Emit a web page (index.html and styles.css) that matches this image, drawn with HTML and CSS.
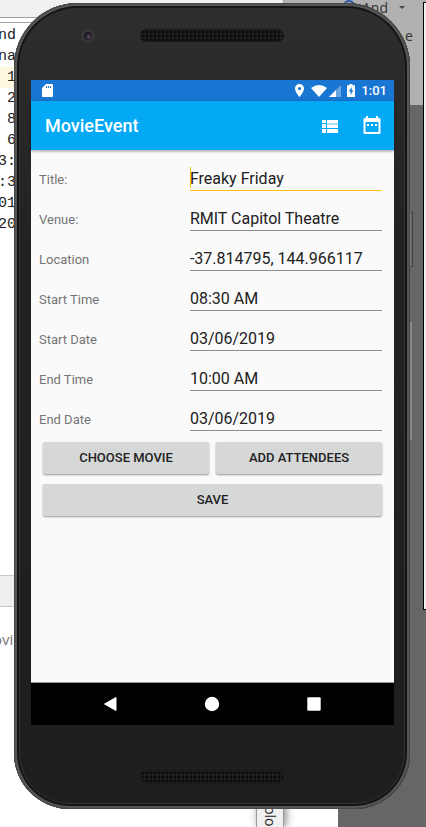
FILE: index.html
```html
<!DOCTYPE html>
<html lang="en">
<head>
<meta charset="utf-8">
<meta name="viewport" content="width=device-width, initial-scale=1">
<title>MovieEvent</title>
<link rel="stylesheet" href="styles.css">
</head>
<body>
<div class="desktop">
  <div class="win toolbar-win"></div>
  <div class="win editor">
    <div class="code">
      <span>nd</span>
      <span>na</span>
      <mark>1</mark>
      <span>2</span>
      <span>8</span>
      <span>6</span>
      <span>3:</span>
      <span>:3</span>
      <span>01</span>
      <span>20</span>
    </div>
  </div>
  <div class="win split"></div>
  <div class="win log">ovie</div>
  <div class="win dimmed"></div>
  <div class="win ide">
    <svg class="ide-icon" viewBox="0 0 14 14"><circle cx="7" cy="7" r="5" fill="none" stroke="#2458a0" stroke-width="2"/></svg>
    <span class="ide-name">And</span>
    <span class="ide-arrow"></span>
    <span class="ide-sub">e</span>
  </div>
  <div class="win tab">plo</div>
  <div class="win outlined"></div>
</div>
<div class="phone">
  <div class="key power"></div>
  <div class="key volume"></div>
  <div class="bezel top">
    <span class="camera"></span>
    <span class="speaker"></span>
  </div>
  <main class="screen">
    <div class="status">
      <svg class="sd" viewBox="0 0 11 13"><path d="M4 0h6q1 0 1 1v11q0 1-1 1H1q-1 0-1-1V4z" fill="#fff"/><path d="M4 2h1v2H4zM6 2h1v2H6zM8 2h1v2H8z" fill="#1976d2"/></svg>
      <svg class="pin" viewBox="0 0 9 13"><path fill="#fff" fill-rule="evenodd" d="M4.500 0A4.500 4.500 0 0 0 0 4.500C0 8 4.500 13 4.500 13S9 8 9 4.500A4.500 4.500 0 0 0 4.500 0zm0 3a1.600 1.600 0 1 1 0 3.200 1.600 1.600 0 0 1 0-3.200z"/></svg>
      <svg class="wifi" viewBox="0 0 16 12"><path fill="#fff" d="M0 3Q8-3 16 3L8 12z"/></svg>
      <svg class="cell" viewBox="0 0 12 12"><path fill="#fff" opacity=".35" d="M12 0v12H0z"/><path fill="#fff" d="M7 5v7H0z"/></svg>
      <svg class="battery" viewBox="0 0 8 13"><path fill="#fff" d="M2.500 0h3v1.200H8V13H0V1.200h2.500z"/><path fill="#1976d2" d="M4.800 3L1.800 7.500h1.800V11l2.800-4.700H4.700z"/></svg>
      <time>1:01</time>
    </div>
    <header class="appbar">
      <h1>MovieEvent</h1>
      <button type="button" aria-label="List"><svg viewBox="0 0 22 22"><path fill="#fff" d="M3 5h4v3H3zM3 9h4v4H3zM3 14h4v4H3zM8 5h11v3H8zM8 10h11v3H8zM8 14h11v4H8z"/><path fill="#fff" opacity=".65" d="M8 8h11v1H8zM8 9h11v1H8z"/></svg></button>
      <button type="button" aria-label="Calendar"><svg viewBox="0 0 22 22"><path fill="#fff" fill-rule="evenodd" d="M5 1h2v2h8V1h2v2h1q1.500 0 1.500 1.500v13Q19.500 19 18 19H4q-1.500 0-1.500-1.500v-13Q2.500 3 4 3h1zM4.500 7v10h13V7zM6 9h2v2H6zM10 9h2v2h-2zM14 9h2v2h-2z"/></svg></button>
    </header>
    <form class="content">
      <div class="field"><label for="t">Title:</label><span class="box focused"><input id="t" type="text" value="Freaky Friday"></span></div>
      <div class="field"><label for="v">Venue:</label><span class="box"><input id="v" type="text" value="RMIT Capitol Theatre"></span></div>
      <div class="field"><label for="l">Location</label><span class="box"><input id="l" type="text" value="-37.814795, 144.966117"></span></div>
      <div class="field"><label for="st">Start Time</label><span class="box"><input id="st" type="text" value="08:30 AM"></span></div>
      <div class="field"><label for="sd">Start Date</label><span class="box"><input id="sd" type="text" value="03/06/2019"></span></div>
      <div class="field"><label for="et">End Time</label><span class="box"><input id="et" type="text" value="10:00 AM"></span></div>
      <div class="field"><label for="ed">End Date</label><span class="box"><input id="ed" type="text" value="03/06/2019"></span></div>
      <div class="actions">
        <button type="button">CHOOSE MOVIE</button>
        <button type="button">ADD ATTENDEES</button>
        <button type="button" class="wide">SAVE</button>
      </div>
    </form>
    <nav class="navbar">
      <button type="button" aria-label="Back"><svg viewBox="0 0 16 16"><path fill="#fff" stroke="#fff" stroke-linejoin="round" d="M2.500 8L14 1.500v13z"/></svg></button>
      <button type="button" aria-label="Home"><svg viewBox="0 0 16 16"><circle cx="8" cy="8" r="7.200" fill="#fff"/></svg></button>
      <button type="button" aria-label="Recent apps"><svg viewBox="0 0 16 16"><rect x="1.300" y="1.300" width="13.400" height="13.400" rx="1" fill="#fff"/></svg></button>
    </nav>
  </main>
  <div class="bezel bottom"><span class="speaker"></span></div>
</div>
</body>
</html>
```
FILE: styles.css
```css
* { box-sizing: border-box; }

body {
  margin: 0;
  position: relative;
  min-height: 100vh;
  display: flex;
  padding: 3px 16px 18px 14px;
  overflow: hidden;
  background: #fff;
  font-family: Roboto, "Liberation Sans", sans-serif;
}

svg { display: block; }
button { padding: 0; border: 0; background: none; font-family: inherit; }

/* Desktop windows behind the device */
.desktop { position: absolute; inset: 0; overflow: hidden; }
.win { position: absolute; }
.toolbar-win { left: 0; top: 0; width: 284px; height: 18px; background: #f0f0f0; border-bottom: 1px solid #a0a0a0; border-right: 1px solid #a0a0a0; }
.editor { left: 0; top: 22px; width: 40px; height: 554px; border-top: 1px solid #a0a0a0; }
.code {
  width: 16px;
  padding-top: 2px;
  display: flex;
  flex-direction: column;
  align-items: flex-end;
  font: 15px/21px "Liberation Mono", monospace;
  color: #222;
}
.code mark { width: 100%; background: #fff8e1; color: inherit; text-align: right; }
.split { left: 0; top: 575px; width: 40px; height: 32px; background: #eee; border: 1px solid #c8c8c8; border-width: 1px 0; }
.log { left: -7px; top: 629px; font: 15px/20px "Open Sans", sans-serif; color: #777; }
.dimmed { left: 338px; right: 0; top: 105px; bottom: 0; background: #666; }
.ide { left: 284px; right: 0; top: 0; height: 105px; background: #b1b1b1; color: #333; font: 14px/18px "Open Sans", sans-serif; }
.ide span, .ide svg { position: absolute; }
.ide-icon { left: 58px; top: -1px; width: 14px; height: 14px; }
.ide-name { left: 78px; top: -1px; }
.ide-sub { left: 121px; top: 27px; }
.ide-arrow { left: 115px; top: 6px; border: 3px solid transparent; border-top-color: #444; }
.tab {
  left: 256px;
  bottom: 0;
  width: 28px;
  height: 52px;
  border: 1px solid #999;
  border-width: 0 1px;
  background: #f0f0f0;
  box-shadow: 2px 0 8px #888;
  writing-mode: vertical-rl;
  text-align: right;
  font: 14px/26px "Open Sans", sans-serif;
  color: #222;
}
.outlined { left: 423px; right: -2px; top: 2px; height: 608px; background: #f2f2f2; border: 1px solid #000; }

/* Device */
.phone {
  position: relative;
  flex: 1;
  display: flex;
  flex-direction: column;
  padding: 0 16px 0 17px;
  border-radius: 64px 64px 56px 56px;
  background: linear-gradient(#2e2e2e, #222 30%, #1e1e1e);
  box-shadow: inset 0 0 0 1px #484848, inset 0 0 0 3px #555, inset 0 0 0 5px #151515, inset 0 0 0 6px #303030;
}
.key { position: absolute; left: 100%; width: 3px; border: 1px solid #444; border-left-color: #777; }
.power { top: 209px; height: 55px; }
.volume { top: 319px; height: 118px; width: 2px; border-color: #888; }
.bezel { display: grid; justify-items: center; align-content: start; position: relative; padding-right: 2px; }
.top { height: 77px; padding-top: 26px; }
.bottom { height: 84px; padding-top: 45px; }
.camera {
  position: absolute;
  left: 50px;
  top: 26px;
  width: 14px;
  height: 14px;
  border-radius: 50%;
  border: 3px solid #363636;
  background: radial-gradient(circle at 60% 60%, #654a5c, #1d1b22 50%);
}
.speaker {
  width: 144px;
  height: 13px;
  border-radius: 6px;
  border: 1px solid #191919;
  background: radial-gradient(circle at 2px 2px, #0b0b0b 1px, transparent 2px) 0 0 / 4px 4px #202020;
}

.screen { flex: 1; display: flex; flex-direction: column; background: #fafafa; color: #212121; }
.status { display: flex; align-items: center; height: 21px; padding: 0 7px 0 11px; background: #1976d2; color: #fff; }
.sd { width: 11px; height: 13px; margin-right: auto; }
.pin { width: 9px; height: 13px; margin-right: 7px; }
.wifi { width: 16px; height: 12px; margin-right: 2px; }
.cell { width: 12px; height: 12px; margin-right: 6px; }
.battery { width: 8px; height: 13px; margin-right: 6px; }
.status time { font-size: 13px; line-height: 21px; font-weight: 500; }

.appbar {
  display: flex;
  align-items: center;
  gap: 20px;
  height: 49px;
  padding: 0 11px 0 14px;
  background: #03a9f4;
  box-shadow: 0 1px 3px #0006;
  color: #fff;
}
.appbar h1 { margin: 0 auto 0 0; font-size: 18px; line-height: 24px; font-weight: 500; }
.appbar svg { width: 22px; height: 22px; }

.content { flex: 1; padding: 1px 12px 0 8px; border-bottom: 1px solid #999; }
.field { display: grid; grid-template-columns: 11fr 14fr; align-items: end; height: 40px; }
.field label { padding-bottom: 3px; font-size: 13px; line-height: 16px; color: #757575; }
.box { display: flex; border-bottom: 1px solid #8c8c8c; }
.box input {
  width: 100%;
  min-width: 0;
  height: 23px;
  padding: 0;
  border: 0;
  outline: 0;
  background: none;
  font: 16px/20px Roboto, "Liberation Sans", sans-serif;
  color: #212121;
}
.focused { border-color: #ffc107; position: relative; }
.focused::before { content: ""; position: absolute; left: 0; top: 0; width: 1px; height: 21px; background: #ffc107; }

.actions { display: grid; grid-template-columns: 1fr 1fr; gap: 10px 7px; padding: 11px 0 0 4px; }
.actions button {
  height: 32px;
  border-radius: 2px;
  background: #d6d8d7;
  box-shadow: 0 1px 2px #0006;
  font-size: 13px;
  line-height: 16px;
  font-weight: 500;
  color: #212121;
}
.wide { grid-column: 1 / -1; }

.navbar { display: flex; justify-content: center; align-items: center; gap: 86px; height: 42px; padding-right: 2px; background: #000; }
.navbar svg { width: 16px; height: 16px; }
```
